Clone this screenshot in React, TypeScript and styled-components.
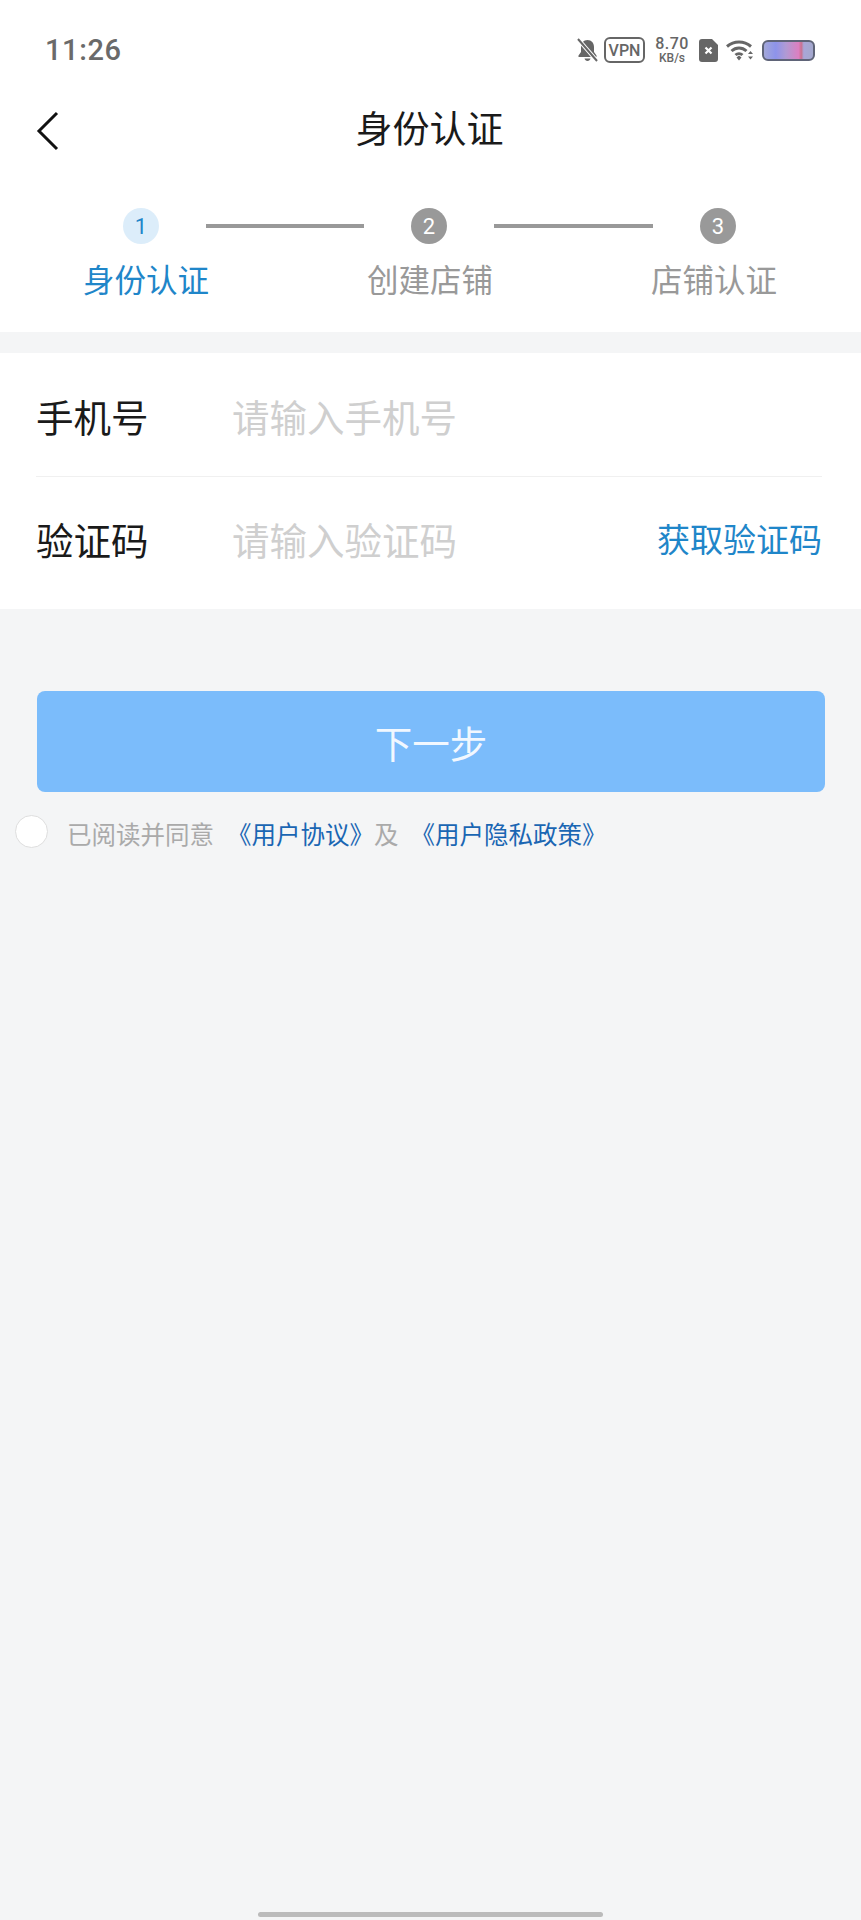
import styled, { createGlobalStyle } from 'styled-components';

const GlobalStyle = createGlobalStyle`
  html, body {
    margin: 0;
    padding: 0;
    background: #f4f5f6;
  }
  * {
    box-sizing: border-box;
  }
`;

const Page = styled.div`
  width: 861px;
  height: 1920px;
  display: flex;
  flex-direction: column;
  background: #f4f5f6;
  font-family: "Noto Sans CJK SC", "Noto Sans", sans-serif;
  overflow: hidden;
`;

const Header = styled.div`
  height: 332px;
  background: #fff;
  display: flex;
  flex-direction: column;
`;

const StatusBar = styled.div`
  height: 100px;
  padding: 0 46px 0 45px;
  display: flex;
  align-items: center;
  justify-content: space-between;
`;

const Time = styled.div`
  font-family: Roboto, sans-serif;
  font-size: 29px;
  font-weight: 500;
  letter-spacing: 0.6px;
  color: #6a6a6a;
`;

const StatusIcons = styled.div`
  display: flex;
  align-items: center;
`;

const VpnBadge = styled.div`
  width: 41px;
  height: 26px;
  margin: 0 9px 0 6px;
  border: 2px solid #666;
  border-radius: 6px;
  display: flex;
  align-items: center;
  justify-content: center;
  font-family: Roboto, sans-serif;
  font-size: 16px;
  font-weight: 500;
  color: #666;
`;

const Speed = styled.div`
  width: 36px;
  margin-right: 9px;
  display: flex;
  flex-direction: column;
  align-items: center;
  font-family: Roboto, sans-serif;
  font-weight: 500;
  color: #666;
`;

const SpeedValue = styled.div`
  font-size: 16px;
  line-height: 16px;
  letter-spacing: 0.5px;
`;

const SpeedUnit = styled.div`
  font-size: 12px;
  line-height: 13px;
`;

const WifiIcon = styled.svg`
  margin: 0 8px;
`;

const NavBar = styled.div`
  height: 58px;
  margin-top: -2px;
  padding-left: 35px;
  display: flex;
  align-items: center;
`;

const BackIcon = styled.svg`
  margin-top: 7px;
`;

const NavTitle = styled.div`
  flex: 1;
  margin-right: 35px;
  padding-right: 27px;
  text-align: center;
  font-size: 37px;
  color: #1a1a1a;
`;

const Track = styled.div`
  margin-top: 52px;
  padding-left: 123px;
  display: flex;
  align-items: center;
`;

const Circle = styled.div<{ $active?: boolean }>`
  width: 36px;
  height: 36px;
  flex: none;
  border-radius: 50%;
  display: flex;
  align-items: center;
  justify-content: center;
  font-family: Roboto, sans-serif;
  font-size: 22px;
  background: ${props => (props.$active ? '#dcedfa' : '#999')};
  color: ${props => (props.$active ? '#1f86c9' : '#fff')};
`;

const Line = styled.div<{ $width: number }>`
  width: ${props => props.$width}px;
  height: 4px;
  margin: 0 47px;
  background: #999;
`;

const Labels = styled.div`
  margin-top: 11px;
  padding-left: 82px;
  display: flex;
  gap: 156px;
`;

const StepLabel = styled.div<{ $active?: boolean }>`
  width: 128px;
  font-size: 31.5px;
  line-height: 46px;
  text-align: center;
  color: ${props => (props.$active ? '#1f86c9' : '#999')};
`;

const Form = styled.div`
  margin-top: 21px;
  height: 256px;
  padding: 0 39px 0 36px;
  background: #fff;
  display: flex;
  flex-direction: column;
`;

const Row = styled.div<{ $divider?: boolean }>`
  height: ${props => (props.$divider ? '124px' : '132px')};
  padding: ${props => (props.$divider ? '2px 0 0' : '0 0 10px')};
  display: flex;
  align-items: center;
  border-bottom: ${props => (props.$divider ? '1px solid #f0f0f0' : 'none')};
`;

const RowLabel = styled.div`
  width: 196px;
  font-size: 37.5px;
  color: #1a1a1a;
`;

const Placeholder = styled.div`
  flex: 1;
  font-size: 37.5px;
  color: #cfcfcf;
`;

const CodeLink = styled.div`
  font-size: 33px;
  color: #1f86c9;
`;

const NextButton = styled.div`
  margin: 82px 36px 0 37px;
  height: 101px;
  border-radius: 8px;
  background: #7bbcfb;
  display: flex;
  align-items: center;
  justify-content: center;
  font-size: 37.5px;
  color: #f2f8ff;
`;

const Agreement = styled.div`
  margin-top: 20px;
  padding-left: 15px;
  display: flex;
  align-items: center;
  font-size: 24.5px;
  color: #aaa;
`;

const Radio = styled.div`
  width: 33px;
  height: 33px;
  margin-right: 19px;
  border-radius: 50%;
  border: 1px solid #dedede;
  background: #fff;
`;

const AgreementText = styled.div`
  display: flex;
  padding-top: 4px;
`;

const Link = styled.span`
  color: #1a66b3;
`;

const Conj = styled.span`
  margin: 0 4px 0 0;
`;

const Policy = styled(Link)`
  margin-left: 8px;
`;

const Agreed = styled.span`
  margin-right: 13px;
`;

const HomeBar = styled.div`
  margin: auto auto 3px;
  width: 345px;
  height: 5px;
  border-radius: 3px;
  background: #bbb;
`;

export default function App() {
  return (
    <Page>
      <GlobalStyle />
      <Header>
        <StatusBar>
          <Time>11:26</Time>
          <StatusIcons>
            <svg width="21" height="24" viewBox="0 0 21 24">
              <path d="M10.5 2c-4 0-6.5 3-6.5 7v5l-2.500 3.500v1.500h18v-1.500l-2.500-3.500v-5c0-4-2.500-7-6.500-7z" fill="#666" />
              <path d="M7.500 20.500h6c-.4 1.600-1.500 2.500-3 2.500s-2.600-.9-3-2.500z" fill="#666" />
              <path d="M1 1l19 22" stroke="#fff" strokeWidth="4" />
              <path d="M1 1l19 22" stroke="#666" strokeWidth="2" />
            </svg>
            <VpnBadge>VPN</VpnBadge>
            <Speed>
              <SpeedValue>8.70</SpeedValue>
              <SpeedUnit>KB/s</SpeedUnit>
            </Speed>
            <svg width="19" height="23" viewBox="0 0 19 23">
              <path d="M3 0h10l6 6v14a3 3 0 0 1-3 3H3a3 3 0 0 1-3-3V3a3 3 0 0 1 3-3z" fill="#666" />
              <path d="M6.500 8.500l6 6M12.500 8.500l-6 6" stroke="#fff" strokeWidth="2.200" />
            </svg>
            <WifiIcon width="28" height="22" viewBox="0 0 28 22">
              <g fill="none" stroke="#666" strokeWidth="3">
                <path d="M1 7.500c7-6 17-6 24 0" />
                <path d="M5.500 12c4.500-4 10.500-4 15 0" />
                <path d="M9.500 16c2-1.800 5-1.800 7 0" />
              </g>
              <path d="M10.500 18.500l2.500-2 2.500 2-2.500 3z" fill="#666" />
              <path d="M22 15l2.500-3 2.500 3zM22 17.500h5l-2.500 3z" fill="#666" />
            </WifiIcon>
            <svg width="53" height="21" viewBox="0 0 53 21">
              <defs>
                <linearGradient id="charge" x1="0" y1="0" x2="1" y2="0">
                  <stop offset="0" stopColor="#a5a9d8" />
                  <stop offset="0.25" stopColor="#8d93ea" />
                  <stop offset="0.45" stopColor="#b09ad4" />
                  <stop offset="0.7" stopColor="#dd7fc0" />
                  <stop offset="0.75" stopColor="#c9708f" />
                  <stop offset="0.8" stopColor="#a9a6d8" />
                  <stop offset="1" stopColor="#a3a8cc" />
                </linearGradient>
              </defs>
              <rect x="1" y="1" width="51" height="19" rx="5" fill="url(#charge)" stroke="#5f6478" strokeWidth="2" />
            </svg>
          </StatusIcons>
        </StatusBar>
        <NavBar>
          <BackIcon width="25" height="40" viewBox="0 0 25 40">
            <path d="M22 2L4 20l18 18" fill="none" stroke="#111" strokeWidth="3" />
          </BackIcon>
          <NavTitle>身份认证</NavTitle>
        </NavBar>
        <Track>
          <Circle $active>1</Circle>
          <Line $width={158} />
          <Circle>2</Circle>
          <Line $width={159} />
          <Circle>3</Circle>
        </Track>
        <Labels>
          <StepLabel $active>身份认证</StepLabel>
          <StepLabel>创建店铺</StepLabel>
          <StepLabel>店铺认证</StepLabel>
        </Labels>
      </Header>
      <Form>
        <Row $divider>
          <RowLabel>手机号</RowLabel>
          <Placeholder>请输入手机号</Placeholder>
        </Row>
        <Row>
          <RowLabel>验证码</RowLabel>
          <Placeholder>请输入验证码</Placeholder>
          <CodeLink>获取验证码</CodeLink>
        </Row>
      </Form>
      <NextButton>下一步</NextButton>
      <Agreement>
        <Radio />
        <AgreementText>
          <Agreed>已阅读并同意</Agreed>
          <Link>《用户协议》</Link>
          <Conj>及</Conj>
          <Policy>《用户隐私政策》</Policy>
        </AgreementText>
      </Agreement>
      <HomeBar />
    </Page>
  );
}
